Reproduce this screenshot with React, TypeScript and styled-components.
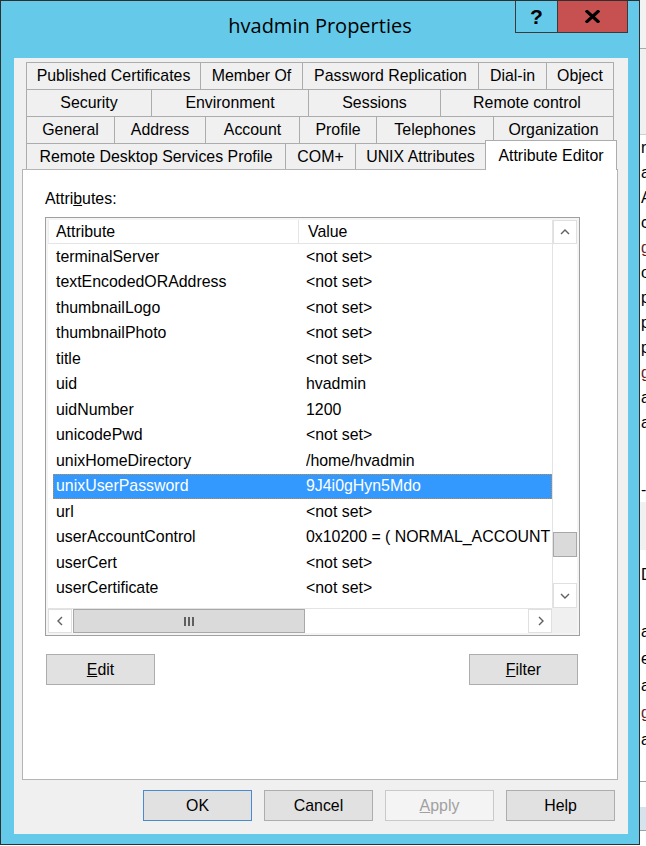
import React from 'react'
import styled, { createGlobalStyle } from 'styled-components'

const GlobalStyle = createGlobalStyle`
  html, body {
    margin: 0;
    padding: 0;
    background: #ffffff;
  }
  body {
    font-family: "Liberation Sans", Arial, sans-serif;
    font-size: 15.9px;
    color: #000;
  }
`

const Screen = styled.div`
  display: flex;
  width: 646px;
  height: 846px;
  overflow: hidden;
`

const Window = styled.div`
  flex: none;
  box-sizing: border-box;
  width: 640px;
  height: 845px;
  border: 1px solid #2f2f2f;
  background: #65c9ea;
  padding: 0 11px 10px 13px;
  display: flex;
  flex-direction: column;
`

const TitleBar = styled.div`
  flex: none;
  height: 57px;
  margin: 0 -11px 0 -13px;
  display: grid;
  grid-template-columns: 1fr auto 1fr;
  align-items: start;
`

const Title = styled.div`
  grid-column: 2;
  padding-top: 12px;
  font-family: "Open Sans", "Noto Sans", sans-serif;
  font-size: 20px;
  line-height: 26px;
  color: #000;
  white-space: nowrap;
`

const CaptionButtons = styled.div`
  grid-column: 3;
  justify-self: end;
  display: flex;
  margin-right: 11px;
  border: 1px solid #3a3a3a;
  border-top: none;
`

const CaptionButton = styled.div<{ $close?: boolean }>`
  width: ${(p) => (p.$close ? 69 : 41)}px;
  height: 31px;
  display: flex;
  align-items: center;
  justify-content: center;
  background: ${(p) => (p.$close ? '#c75050' : 'transparent')};
  font-family: "Liberation Sans", Arial, sans-serif;
  font-weight: bold;
  font-size: 21px;
  color: #000;

  & + & {
    border-left: 1px solid #3a3a3a;
  }
`

const Content = styled.div`
  flex: 1;
  background: #f0f0f0;
  display: flex;
  flex-direction: column;
  padding: 4px 10px 0 8px;
`

const TabStrip = styled.div`
  display: flex;
  flex-direction: column;
  margin-left: 4px;
`

const TabRow = styled.div<{ $h: number }>`
  display: flex;
  height: ${(p) => p.$h}px;
`

const Tab = styled.div<{ $w: number; $last?: boolean; $selected?: boolean }>`
  box-sizing: border-box;
  flex: none;
  width: ${(p) => p.$w}px;
  border-top: 1px solid #acacac;
  border-left: 1px solid #acacac;
  border-right: ${(p) => (p.$last ? '1px solid #acacac' : 'none')};
  background: ${(p) => (p.$selected ? '#ffffff' : '#f0f0f0')};
  display: flex;
  align-items: center;
  justify-content: center;
  white-space: nowrap;
  ${(p) =>
    p.$selected &&
    `
    position: relative;
    z-index: 1;
    margin-top: -3px;
    height: calc(100% + 4px);
  `}
`

const Panel = styled.div`
  box-sizing: border-box;
  width: 596px;
  height: 611px;
  background: #ffffff;
  border: 1px solid #b4b4b4;
  padding: 20px 0 0 22px;
  display: flex;
  flex-direction: column;
`

const FieldLabel = styled.div`
  line-height: 18px;
`

const ListBox = styled.div`
  box-sizing: border-box;
  margin-top: 9px;
  width: 535px;
  height: 419px;
  border: 1px solid #a0a0a0;
  padding: 2px;
  background: #f4f4f4;
`

const ListGrid = styled.div`
  display: grid;
  grid-template-columns: 1fr 25px;
  grid-template-rows: 1fr 25px;
  height: 100%;
`

const ListMain = styled.div`
  background: #ffffff;
  overflow: hidden;
`

const HeaderRow = styled.div`
  box-sizing: border-box;
  display: grid;
  grid-template-columns: 250px 1fr;
  height: 24px;
  border-bottom: 1px solid #e5e5e5;
  border-left: 1px solid #eeeeee;
`

const HeaderCell = styled.div<{ $first?: boolean }>`
  line-height: 23px;
  padding-left: ${(p) => (p.$first ? 7 : 9)}px;
  border-right: ${(p) => (p.$first ? '1px solid #e5e5e5' : 'none')};
  white-space: nowrap;
`

const Row = styled.div<{ $selected?: boolean }>`
  box-sizing: border-box;
  display: grid;
  grid-template-columns: 250px 1fr;
  align-items: center;
  height: 25.5px;
  margin-left: 5px;
  padding-left: 3px;
  white-space: nowrap;
  overflow: hidden;
  background: ${(p) => (p.$selected ? '#3399ff' : 'transparent')};
  color: ${(p) => (p.$selected ? '#ffffff' : '#000000')};
  outline: ${(p) => (p.$selected ? '1px dotted #c98a42' : 'none')};
  outline-offset: -1px;
`

const Cell = styled.span`
  overflow: hidden;
`

const VScroll = styled.div`
  display: flex;
  flex-direction: column;
  background: #ffffff;
  border-left: 1px solid #e3e3e3;
`

const HScroll = styled.div`
  display: flex;
  background: #ffffff;
  border-top: 1px solid #e3e3e3;
`

const ArrowBox = styled.div<{ $size: number; $vertical?: boolean }>`
  box-sizing: border-box;
  flex: none;
  ${(p) => (p.$vertical ? `height: ${p.$size}px;` : `width: ${p.$size}px;`)}
  border: 1px solid #e0e0e0;
  background: #ffffff;
  display: flex;
  align-items: center;
  justify-content: center;
`

const Track = styled.div<{ $vertical?: boolean }>`
  flex: 1;
  display: flex;
  flex-direction: ${(p) => (p.$vertical ? 'column' : 'row')};
`

const Thumb = styled.div<{ $vertical?: boolean; $size: number }>`
  box-sizing: border-box;
  flex: none;
  ${(p) => (p.$vertical ? `height: ${p.$size}px;` : `width: ${p.$size}px;`)}
  background: #dadada;
  border: 1px solid #a8a8a8;
  display: flex;
  align-items: center;
  justify-content: center;
  gap: 2px;
`

const GripBar = styled.span`
  width: 2px;
  height: 9px;
  background: #5f5f5f;
`

const Corner = styled.div`
  background: #f0f0f0;
`

const PanelButtons = styled.div`
  display: flex;
  justify-content: space-between;
  width: 535px;
  box-sizing: border-box;
  padding: 0 2px 0 1px;
  margin-top: 18px;
`

const DialogButton = styled.button<{ $default?: boolean }>`
  box-sizing: border-box;
  width: 109px;
  height: 31px;
  padding: 0;
  background: #e1e1e1;
  border: 1px solid ${(p) => (p.$default ? '#4a8bd0' : '#adadad')};
  font: inherit;
  color: #000;

  &:disabled {
    background: #f4f4f4;
    border-color: #c9c9c9;
    color: #a0a0a0;
  }
`

const ButtonBar = styled.div`
  display: flex;
  justify-content: flex-end;
  gap: 12px;
  margin-top: 10px;
  padding-right: 3px;
`

const BackdropStrip = styled.div`
  flex: none;
  width: 6px;
  height: 846px;
  overflow: hidden;
  background: #ffffff;
  display: flex;
  flex-direction: column;
`

const BackdropBand = styled.div<{ $h: number; $bg: string; $line?: string }>`
  flex: none;
  box-sizing: border-box;
  height: ${(p) => p.$h}px;
  background: ${(p) => p.$bg};
  border-bottom: ${(p) => (p.$line ? `1px solid ${p.$line}` : 'none')};
`

const BackdropText = styled.div<{ $h: number; $color?: string }>`
  flex: none;
  height: ${(p) => p.$h}px;
  line-height: ${(p) => p.$h}px;
  padding-left: 1px;
  white-space: nowrap;
  color: ${(p) => p.$color || '#000'};
`

const Chevron = ({ dir }: { dir: 'up' | 'down' | 'left' | 'right' }) => {
  const pts = {
    up: '1,6 5,2 9,6',
    down: '1,2 5,6 9,2',
    left: '6,1 2,5 6,9',
    right: '3,1 7,5 3,9',
  }[dir]
  const vertical = dir === 'up' || dir === 'down'
  return (
    <svg width={vertical ? 10 : 9} height={vertical ? 8 : 10} viewBox={vertical ? '0 0 10 8' : '0 0 9 10'}>
      <polyline points={pts} fill="none" stroke="#606060" strokeWidth="1.4" />
    </svg>
  )
}

const CloseGlyph = () => (
  <svg width="15" height="13" viewBox="0 0 15 13">
    <path d="M2 1.5 L13 11.5 M13 1.5 L2 11.5" stroke="#000" strokeWidth="3.2" strokeLinecap="square" fill="none" />
  </svg>
)

const tabRows = [
  { h: 27, tabs: [['Published Certificates', 174], ['Member Of', 102], ['Password Replication', 176], ['Dial-in', 68], ['Object', 68]] },
  { h: 27, tabs: [['Security', 125], ['Environment', 157], ['Sessions', 132], ['Remote control', 174]] },
  { h: 27, tabs: [['General', 88], ['Address', 91], ['Account', 94], ['Profile', 77], ['Telephones', 117], ['Organization', 121]] },
  { h: 26, tabs: [['Remote Desktop Services Profile', 259], ['COM+', 70], ['UNIX Attributes', 130], ['Attribute Editor', 132]] },
] as { h: number; tabs: [string, number][] }[]

const attributes: [string, string][] = [
  ['terminalServer', '<not set>'],
  ['textEncodedORAddress', '<not set>'],
  ['thumbnailLogo', '<not set>'],
  ['thumbnailPhoto', '<not set>'],
  ['title', '<not set>'],
  ['uid', 'hvadmin'],
  ['uidNumber', '1200'],
  ['unicodePwd', '<not set>'],
  ['unixHomeDirectory', '/home/hvadmin'],
  ['unixUserPassword', '9J4i0gHyn5Mdo'],
  ['url', '<not set>'],
  ['userAccountControl', '0x10200 = ( NORMAL_ACCOUNT'],
  ['userCert', '<not set>'],
  ['userCertificate', '<not set>'],
]

const selectedAttribute = 'unixUserPassword'

// vertical scrollbar: 339px of track, thumb 25px, scrolled near the end
const vTrack = 339
const vThumb = 25
const vScrollRatio = 0.917
const vOffset = Math.round((vTrack - vThumb) * vScrollRatio)

const backdrop: { text: string; h: number; color?: string }[] = [
  { text: 'ri', h: 25 },
  { text: 'ab', h: 25 },
  { text: 'Ac', h: 25 },
  { text: 'co', h: 25 },
  { text: 'gr', h: 25, color: '#6b1c1c' },
  { text: 'ob', h: 25 },
  { text: 'pr', h: 25 },
  { text: 'pr', h: 25 },
  { text: 'pr', h: 25 },
  { text: 'gr', h: 25, color: '#6b1c1c' },
  { text: 'ab', h: 25 },
  { text: 'ab', h: 25 },
  { text: '', h: 42 },
  { text: '-in', h: 25 },
]

const backdropLower: { text: string; h: number; color?: string }[] = [
  { text: '', h: 12 },
  { text: 'Di', h: 25 },
  { text: '', h: 32 },
  { text: 'ab', h: 26 },
  { text: 'er', h: 27 },
  { text: 'ab', h: 27 },
  { text: 'gr', h: 27, color: '#6b1c1c' },
  { text: 'ab', h: 27 },
]

export default function App() {
  return (
    <>
      <GlobalStyle />
      <Screen>
        <Window>
          <TitleBar>
            <Title>hvadmin Properties</Title>
            <CaptionButtons>
              <CaptionButton>?</CaptionButton>
              <CaptionButton $close>
                <CloseGlyph />
              </CaptionButton>
            </CaptionButtons>
          </TitleBar>
          <Content>
            <TabStrip>
              {tabRows.map((row, ri) => (
                <TabRow key={ri} $h={row.h}>
                  {row.tabs.map(([label, w], ti) => (
                    <Tab
                      key={label}
                      $w={w}
                      $last={ti === row.tabs.length - 1}
                      $selected={label === 'Attribute Editor'}
                    >
                      {label}
                    </Tab>
                  ))}
                </TabRow>
              ))}
            </TabStrip>
            <Panel>
              <FieldLabel>
                Attri<u>b</u>utes:
              </FieldLabel>
              <ListBox>
                <ListGrid>
                  <ListMain>
                    <HeaderRow>
                      <HeaderCell $first>Attribute</HeaderCell>
                      <HeaderCell>Value</HeaderCell>
                    </HeaderRow>
                    {attributes.map(([name, value]) => (
                      <Row key={name} $selected={name === selectedAttribute}>
                        <Cell>{name}</Cell>
                        <Cell>{value}</Cell>
                      </Row>
                    ))}
                  </ListMain>
                  <VScroll>
                    <ArrowBox $vertical $size={24}>
                      <Chevron dir="up" />
                    </ArrowBox>
                    <Track $vertical>
                      <Thumb $vertical $size={vThumb} style={{ marginTop: vOffset }} />
                    </Track>
                    <ArrowBox $vertical $size={25}>
                      <Chevron dir="down" />
                    </ArrowBox>
                  </VScroll>
                  <HScroll>
                    <ArrowBox $size={24}>
                      <Chevron dir="left" />
                    </ArrowBox>
                    <Track>
                      <Thumb $size={232} style={{ marginLeft: 1 }}>
                        <GripBar />
                        <GripBar />
                        <GripBar />
                      </Thumb>
                    </Track>
                    <ArrowBox $size={24}>
                      <Chevron dir="right" />
                    </ArrowBox>
                  </HScroll>
                  <Corner />
                </ListGrid>
              </ListBox>
              <PanelButtons>
                <DialogButton>
                  <u>E</u>dit
                </DialogButton>
                <DialogButton>
                  <u>F</u>ilter
                </DialogButton>
              </PanelButtons>
            </Panel>
            <ButtonBar>
              <DialogButton $default>OK</DialogButton>
              <DialogButton>Cancel</DialogButton>
              <DialogButton disabled>
                <u>A</u>pply
              </DialogButton>
              <DialogButton>Help</DialogButton>
            </ButtonBar>
          </Content>
        </Window>
        <BackdropStrip>
          <BackdropBand $h={49} $bg="#f2f2f2" $line="#a9a9a9" />
          <BackdropBand $h={86} $bg="#f0f0f0" $line="#cfcfcf" />
          {backdrop.map((b, i) => (
            <BackdropText key={i} $h={b.h} $color={b.color}>
              {b.text}
            </BackdropText>
          ))}
          <BackdropBand $h={48} $bg="#f0f0f0" />
          {backdropLower.map((b, i) => (
            <BackdropText key={i} $h={b.h} $color={b.color}>
              {b.text}
            </BackdropText>
          ))}
          <BackdropBand $h={29} $bg="#ffffff" $line="#a0a0a0" />
          <BackdropBand $h={25} $bg="#ffffff" />
          <BackdropBand $h={24} $bg="#d7e3ec" $line="#a0a0a0" />
        </BackdropStrip>
      </Screen>
    </>
  )
}
